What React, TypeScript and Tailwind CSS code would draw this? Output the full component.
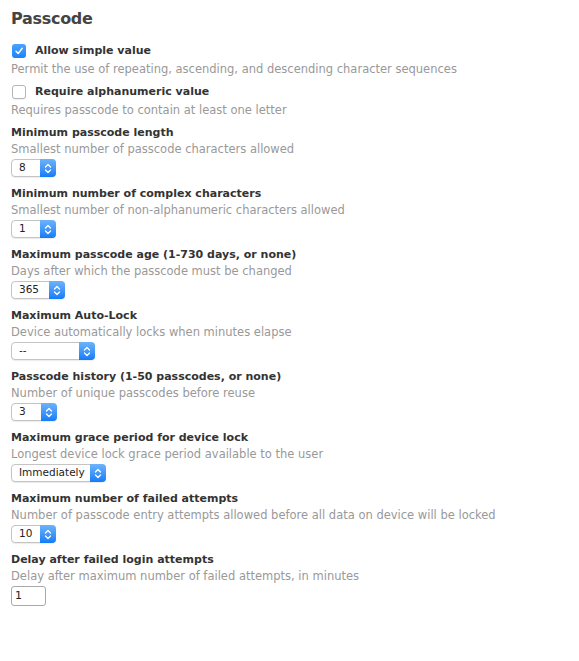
import React from "react";

const Chevrons = () => (
  <svg width="8" height="11" viewBox="0 0 8 11" fill="none" stroke="white" strokeWidth="1.3" strokeLinecap="round" strokeLinejoin="round">
    <path d="M1.5 4 L4 1.5 L6.5 4" />
    <path d="M1.5 7 L4 9.5 L6.5 7" />
  </svg>
);

const Select = ({ value, width }: { value: string; width: string }) => (
  <div className={`flex h-[18px] ${width} items-stretch rounded-[4px] border border-[#c4c4c4] bg-white shadow-[0_1px_1px_rgba(0,0,0,0.08)]`}>
    <div className="flex flex-1 items-center pl-[7px] text-[10.5px] text-[#222]">{value}</div>
    <div className="-my-px -mr-px flex w-[16px] items-center justify-center rounded-r-[4px] bg-gradient-to-b from-[#6cb3fa] to-[#0f7cf7]">
      <Chevrons />
    </div>
  </div>
);

const Checkbox = ({ checked }: { checked: boolean }) =>
  checked ? (
    <div className="flex h-[14px] w-[14px] items-center justify-center rounded-[3px] bg-gradient-to-b from-[#4aa3fb] to-[#1a82fb]">
      <svg width="10" height="10" viewBox="0 0 10 10" fill="none" stroke="white" strokeWidth="1.4" strokeLinecap="round" strokeLinejoin="round">
        <path d="M2 5.2 L4.2 7.5 L8.2 2.3" />
      </svg>
    </div>
  ) : (
    <div className="h-[14px] w-[14px] rounded-[3px] border border-[#b5b5b5] bg-white shadow-[0_1px_1px_rgba(0,0,0,0.06)]" />
  );

type Field = { label: string; desc: string; value: string; width: string };

const fields: Field[] = [
  { label: "Minimum passcode length", desc: "Smallest number of passcode characters allowed", value: "8", width: "w-[45px]" },
  { label: "Minimum number of complex characters", desc: "Smallest number of non-alphanumeric characters allowed", value: "1", width: "w-[45px]" },
  { label: "Maximum passcode age (1-730 days, or none)", desc: "Days after which the passcode must be changed", value: "365", width: "w-[54px]" },
  { label: "Maximum Auto-Lock", desc: "Device automatically locks when minutes elapse", value: "--", width: "w-[84px]" },
  { label: "Passcode history (1-50 passcodes, or none)", desc: "Number of unique passcodes before reuse", value: "3", width: "w-[46px]" },
  { label: "Maximum grace period for device lock", desc: "Longest device lock grace period available to the user", value: "Immediately", width: "w-[95px]" },
  { label: "Maximum number of failed attempts", desc: "Number of passcode entry attempts allowed before all data on device will be locked", value: "10", width: "w-[45px]" },
];

export default function App() {
  return (
    <div className="min-h-screen bg-white pl-[11px] pt-[8px] font-['DejaVu_Sans',sans-serif] text-[#333]">
      <h1 className="text-[16px] font-bold leading-[21px] tracking-[-0.3px] text-[#444]">Passcode</h1>

      <div className="mt-[14px] flex items-center gap-[9px] pl-px">
        <Checkbox checked />
        <span className="text-[11px] font-bold leading-[16px]">Allow simple value</span>
      </div>
      <p className="mt-[2px] text-[11.5px] leading-[16px] text-[#999]">
        Permit the use of repeating, ascending, and descending character sequences
      </p>

      <div className="mt-[7px] flex items-center gap-[9px] pl-px">
        <Checkbox checked={false} />
        <span className="text-[11px] font-bold leading-[16px]">Require alphanumeric value</span>
      </div>
      <p className="mt-[2px] text-[11.5px] leading-[16px] text-[#999]">Requires passcode to contain at least one letter</p>

      <div className="mt-[7px] flex flex-col gap-[9px]">
        {fields.map((f) => (
          <div key={f.label} className="flex flex-col">
            <span className="text-[11px] font-bold leading-[16px]">{f.label}</span>
            <span className="mb-[2px] text-[11.5px] leading-[16px] text-[#999]">{f.desc}</span>
            <Select value={f.value} width={f.width} />
          </div>
        ))}
        <div className="flex flex-col">
          <span className="text-[11px] font-bold leading-[16px]">Delay after failed login attempts</span>
          <span className="mb-[2px] text-[11.5px] leading-[16px] text-[#999]">Delay after maximum number of failed attempts, in minutes</span>
          <div className="flex h-[20px] w-[35px] items-center rounded-[3px] border border-[#a9a9a9] bg-white pl-[3px] text-[11px] text-[#222]">1</div>
        </div>
      </div>
    </div>
  );
}
